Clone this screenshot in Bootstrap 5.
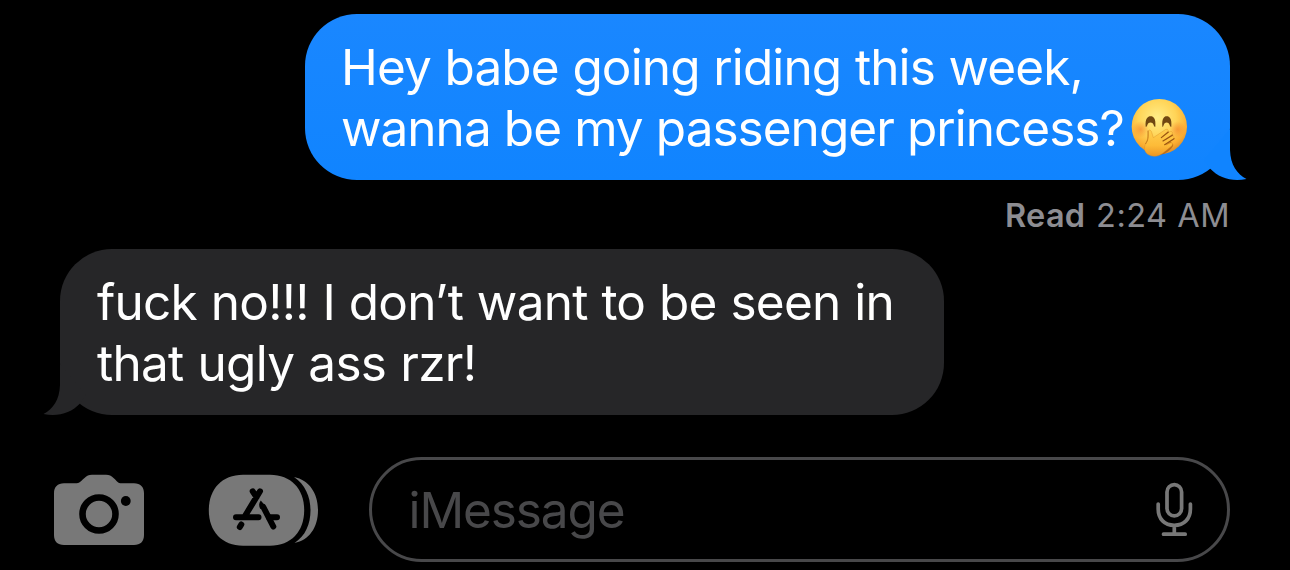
<!DOCTYPE html>
<html lang="en">
<head>
<meta charset="utf-8">
<meta name="viewport" content="width=device-width, initial-scale=1">
<title>iMessage</title>
<link href="https://cdn.jsdelivr.net/npm/bootstrap@5.3.0/dist/css/bootstrap.min.css" rel="stylesheet">
<style>
body{background:#000;font-family:Inter,"Liberation Sans",sans-serif;height:570px;overflow:hidden}
.thread{padding:14px 60px 0}
.bubble{height:166px;border-radius:52px;padding:23px 37px 0;font-size:49.5px;line-height:61px;color:#fff;white-space:nowrap}
.bubble-out{width:925px;padding-left:36px;background:linear-gradient(#1a87ff,#1084ff)}
.bubble-in{width:884px;background:#262628;margin-top:16px}
.tail{width:50px;height:50px}
.tail-out{right:-20px;color:#1084ff}
.tail-in{left:-20px;color:#262628;transform:scaleX(-1)}
.emoji{width:66px;height:66px;margin:-4px 0 0 2.4px}
.receipt{height:53px;font-size:32.5px;line-height:40px;padding-top:16px;color:#8d8d92}
.receipt .status{letter-spacing:.3px}
.receipt .time{letter-spacing:.5px;margin-left:1.5px}
.composer{height:105px;margin-top:42px;padding-left:53px;padding-right:60px}
.composer-icons{color:#787878}
.icon-camera{width:92px;height:72px;margin-top:17px}
.icon-apps{width:112px;height:72px;margin:17px 0 0 63px}
.field{height:105px;width:861px;border:3px solid #48484a;border-radius:53px;padding:0 34px 0 36.5px;font-size:49.5px;color:#48484a}
.placeholder-text{letter-spacing:-1.1px;padding-top:1px}
.icon-mic{width:38px;height:56px;color:#787878;margin-bottom:2px}
.l1{letter-spacing:-.88px;word-spacing:.6px}.l2{letter-spacing:-.98px;word-spacing:.2px}.l3{letter-spacing:-.75px;word-spacing:.6px}.l4{letter-spacing:-.72px;word-spacing:.8px}
</style>
<script src="https://cdn.jsdelivr.net/npm/bootstrap@5.3.0/dist/js/bootstrap.bundle.min.js"></script>
</head>
<body>
<main class="thread d-flex flex-column">
  <div class="bubble bubble-out position-relative align-self-end">
    <div><span class="l1">Hey babe going riding this week,</span></div>
    <div class="d-flex"><span class="l2">wanna be my passenger princess?</span>
      <svg class="emoji flex-shrink-0" viewBox="0 0 198 198" role="img" aria-label="Face with hand over mouth">
        <defs>
          <radialGradient id="face" cx=".46" cy=".34" r=".68"><stop offset="0" stop-color="#ffed88"/><stop offset=".5" stop-color="#ffd457"/><stop offset=".82" stop-color="#fbad31"/><stop offset="1" stop-color="#d98a2c"/></radialGradient>
          <radialGradient id="blush"><stop offset="0" stop-color="#f47d2c" stop-opacity=".6"/><stop offset="1" stop-color="#f47d2c" stop-opacity="0"/></radialGradient>
          <linearGradient id="hand" x1="0" y1="0" x2="0" y2="1"><stop offset="0" stop-color="#ffcf4f"/><stop offset=".6" stop-color="#fdbb38"/><stop offset="1" stop-color="#ec9524"/></linearGradient>
        </defs>
        <circle cx="100" cy="98" r="83" fill="url(#face)"/>
        <circle cx="44" cy="106" r="25" fill="url(#blush)"/>
        <circle cx="155" cy="106" r="25" fill="url(#blush)"/>
        <path d="M59 98C57 74 65 67 74 67C83 67 90 74 88 98C86 99 84 97 83 93C80 83 67 83 64 93C63 97 61 99 59 98ZM109 98C107 74 114 67 122 67C131 67 138 74 136 98C134 99 132 97 131 93C128 83 116 83 113 93C112 97 111 99 109 98Z" fill="#704712"/>
        <path d="M86 184C112 186 138 168 142 152L116 124Z" fill="#a65a12" opacity=".7"/>
        <path d="M67 111C69 106 75 108 77 115L82 131L118 107C125 103 130 109 124 115L111 127L131 113C138 110 142 117 137 122L119 137L136 127C143 124 147 131 141 137L120 153L132 147C139 144 142 151 136 157L110 178C95 190 78 189 65 181C53 172 54 157 60 147C67 137 64 124 67 111Z" fill="url(#hand)" stroke="#d88a22" stroke-width="1.200"/>
        <path d="M106 131L127 114M111 141L140 123M116 152L144 134" fill="none" stroke="#985311" stroke-width="3.500" stroke-linecap="round"/>
        <path d="M66 111C67 131 67 137 59 149" fill="none" stroke="#b9701a" stroke-width="2.500" stroke-linecap="round"/>
      </svg>
    </div>
    <svg class="tail tail-out position-absolute bottom-0" viewBox="0 0 50 50" aria-hidden="true"><path fill="currentColor" d="M29 0H30V20C30.500 35 37 44 46.500 49C32 52 19 48 10 38.500L4 30Z"/></svg>
  </div>
  <div class="receipt text-end"><span class="status fw-semibold">Read</span> <span class="time">2:24 AM</span></div>
  <div class="bubble bubble-in position-relative">
    <div><span class="l3">fuck no!!! I don’t want to be seen in</span></div>
    <div><span class="l4">that ugly ass rzr!</span></div>
    <svg class="tail tail-in position-absolute bottom-0" viewBox="0 0 50 50" aria-hidden="true"><path fill="currentColor" d="M29 0H30V20C30.500 35 37 44 46.500 49C32 52 19 48 10 38.500L4 30Z"/></svg>
  </div>
</main>
<footer class="composer d-flex justify-content-between">
  <div class="composer-icons d-flex">
    <svg class="icon-camera" viewBox="53 474 92 72" aria-label="Camera">
      <path fill="currentColor" d="M64 483.300H75C80 483.300 81 481 84.500 478C87 475.500 88.500 474.800 92 474.800H106C109.500 474.800 111 475.500 113.500 478C117 481 117.500 483.300 122 483.300H134C140.500 483.300 144 487 144 493.300V535C144 541.500 140.500 545 134 545H64C57.500 545 54 541.500 54 535V493.300C54 487 57.500 483.300 64 483.300Z"/>
      <circle cx="99" cy="514" r="16.500" fill="none" stroke="#000" stroke-width="6.600"/>
      <circle cx="125.800" cy="501" r="4.900"/>
    </svg>
    <svg class="icon-apps" viewBox="208 474 112 72" aria-label="Apps">
      <path fill="currentColor" d="M243 474.800H270C291 474.800 304.200 489 304.200 510.300C304.200 531.500 291 545.800 270 545.800H243C222 545.800 208.800 531.500 208.800 510.300C208.800 489 222 474.800 243 474.800Z"/>
      <path fill="currentColor" d="M294 477C309 480 318 493 318 510.300C318 527.500 309 540.500 294.500 543C305.500 536 310.500 524 310.500 510.300C310.500 496.500 305 484.500 294 477Z"/>
      <g fill="none" stroke="#000" stroke-width="6" stroke-linecap="round">
        <path d="M252.700 491.300L256.500 497M260 491.300L245 516M236 517.300H258.500M269 517.300H277M241.300 524.500L239.800 527"/>
        <path d="M263.300 507L273.300 526.500"/>
      </g>
      <path d="M260.800 500.500C258.800 503 258.600 506 260.300 509L266.200 507Z"/>
    </svg>
  </div>
  <div class="field d-flex align-items-center justify-content-between"><span class="placeholder-text">iMessage</span>
    <svg class="icon-mic" viewBox="1155 481 38 56" fill="none" stroke="currentColor" stroke-width="3.700" stroke-linecap="round" aria-label="Dictate">
      <rect x="1167" y="484.600" width="14.600" height="31.300" rx="7.300"/>
      <path d="M1158.200 504V509C1158.200 519 1164.500 525.300 1174.300 525.300C1184 525.300 1190.400 519 1190.400 509V504M1174.300 526V534M1163.500 534.200H1185.200"/>
    </svg>
  </div>
</footer>
</body>
</html>
